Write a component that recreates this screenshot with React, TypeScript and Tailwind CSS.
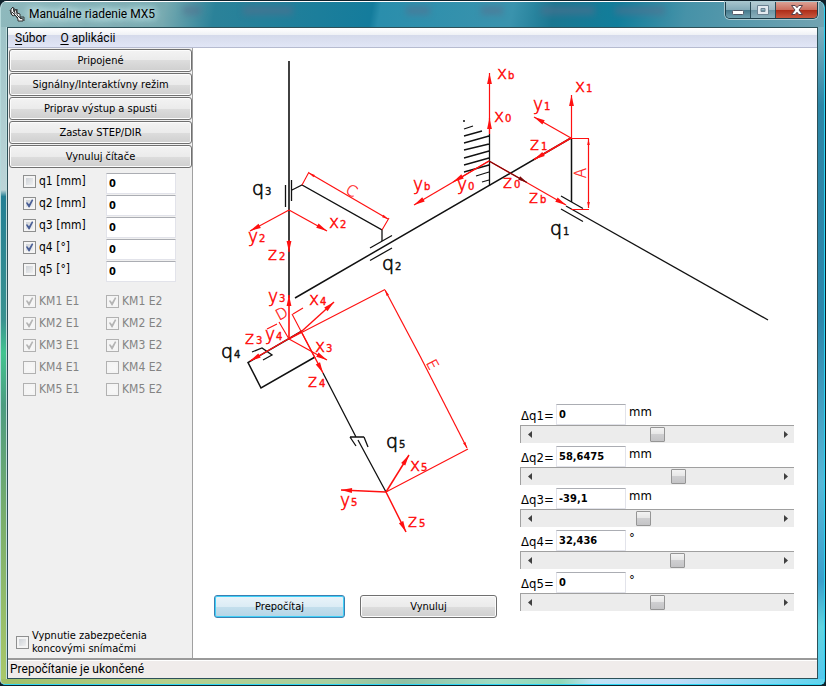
import { useState } from 'react'

const RED = '#ff1010'
const INK = '#111111'

const axes = [
  { name: 'q1', unit: '[mm]', on: false },
  { name: 'q2', unit: '[mm]', on: true },
  { name: 'q3', unit: '[mm]', on: true },
  { name: 'q4', unit: '[°]', on: true },
  { name: 'q5', unit: '[°]', on: false },
]

const deltas = [
  { name: 'q1', value: '0', unit: 'mm', range: 315 },
  { name: 'q2', value: '58,6475', unit: 'mm', range: 315 },
  { name: 'q3', value: '-39,1', unit: 'mm', range: 315 },
  { name: 'q4', value: '32,436', unit: '°', range: 180 },
  { name: 'q5', value: '0', unit: '°', range: 180 },
]

const panelButtons = [
  'Pripojené',
  'Signálny/Interaktívny režim',
  'Priprav výstup a spusti',
  'Zastav STEP/DIR',
  'Vynuluj čítače',
]

type CheckProps = { id: string; checked: boolean; disabled?: boolean }

const Check = ({ id, checked, disabled = false }: CheckProps) => {
  return (
    <span className="grid h-[13px] w-[13px] shrink-0">
      <input
        id={id}
        type="checkbox"
        defaultChecked={checked}
        disabled={disabled}
        className="peer col-start-1 row-start-1 h-[13px] w-[13px] appearance-none border border-[#8e8f8f] bg-linear-to-br from-[#c5cad0] to-[#f8f8f8] shadow-[inset_0_0_0_2px_#f4f4f4] disabled:border-[#b1b1b1] disabled:from-[#f4f4f4] disabled:to-[#f8f8f8]"
      />
      <svg
        viewBox="0 0 13 13"
        className="pointer-events-none invisible col-start-1 row-start-1 h-[13px] w-[13px] text-[#4a5f97] peer-checked:visible peer-disabled:text-[#b4b4b4]"
      >
        <path d="M3 6l1-1 2 2.300 3-5 1.300.7L6.500 10.500H5.700z" fill="currentColor" />
      </svg>
    </span>
  )
}

const valueBox =
  "h-[21px] w-[70px] border border-[#e2e3ea] border-t-[#abadb3] bg-white px-[2px] font-['DejaVu_Sans_Condensed','DejaVu_Sans',sans-serif] text-[11px] font-bold text-black outline-none"

const greyButton =
  'h-[23px] rounded-[3px] border border-[#707070] bg-[linear-gradient(#f3f3f3,#ebebeb_50%,#dddddd_50%,#cfcfcf)] pt-[2px] text-[11px] text-black shadow-[inset_0_0_0_1px_#fcfcfc]'

type ArrowProps = { from: [number, number]; to: [number, number]; color?: string; size?: number; width?: number }

const Arrow = ({ from, to, color = RED, size = 11, width = 1.2 }: ArrowProps) => {
  const angle = (Math.atan2(to[1] - from[1], to[0] - from[0]) * 180) / Math.PI
  const half = size * 0.22
  return (
    <g>
      <line x1={from[0]} y1={from[1]} x2={to[0]} y2={to[1]} stroke={color} strokeWidth={width} />
      <polygon
        points={`0,0 ${-size},${-half} ${-size},${half}`}
        transform={`translate(${to[0]} ${to[1]}) rotate(${angle})`}
        fill={color}
      />
    </g>
  )
}

const jointLabels: [string, string, number, number][] = [
  ['q', '3', 252, 195],
  ['q', '1', 550, 235],
  ['q', '2', 382, 270],
  ['q', '4', 221, 358],
  ['q', '5', 386, 448],
]

const axisLabels: [string, string, number, number][] = [
  ['x', 'b', 497, 79],
  ['x', '0', 494, 122],
  ['x', '1', 575, 92],
  ['y', '1', 533, 110],
  ['z', '1', 530, 150],
  ['z', '0', 503, 188],
  ['z', 'b', 529, 203],
  ['y', 'b', 413, 190],
  ['y', '0', 457, 190],
  ['y', '2', 248, 242],
  ['x', '2', 329, 228],
  ['z', '2', 268, 260],
  ['y', '3', 268, 302],
  ['x', '4', 309, 305],
  ['z', '3', 245, 344],
  ['y', '4', 265, 340],
  ['x', '3', 315, 352],
  ['z', '4', 308, 387],
  ['x', '5', 410, 471],
  ['y', '5', 340, 506],
  ['z', '5', 408, 527],
]

const Kinematics = () => {
  return (
    <svg
      viewBox="193 48 624 609"
      role="img"
      aria-label="MX5"
      className="col-start-1 row-start-1 w-full max-w-[624px] font-['DejaVu_Sans',sans-serif]"
    >
      <g fill="none" stroke={INK} strokeWidth="1.3">
        <path d="M289 61V298" strokeWidth="1.600" />
        <path d="M285.500 185v22M291.500 180v21M292 190l10-5 80 45v11" />
        <path d="M370 248l22-12.500M370 260.500l22-12.500" />
        <path d="M295 298L571 138M571.500 138v64" strokeWidth="1.500" />
        <path d="M489.500 134v52M463 121h2M464 129l9-3M464 136l18-5M464 143l25-7M464 150l25-6M464 158l25-7M464 165l25-7M464 172l25-7M476 176l13-4M482 182l7-2" />
        <path d="M561 196l22 12.500M561 209l22 12.500" />
        <path d="M566 206L768 320" />
        <path d="M302 331L248 362.500 261 388 315 357" strokeWidth="1.500" />
        <path d="M252 352l10-4 10 7-9 5" />
        <path d="M323 373l33 64M350 437h14M350 437l6 9M364 437l4 10M358 440l28 52" />
      </g>

      <g fill="none" stroke={RED} strokeWidth="1.1">
        <path d="M302 185l7-13M382 230l7-12" />
        <path d="M571 138.500h18M571 209.500h18" />
        <path d="M289 339L385 289.500 M386 492L468 449" />
        <path d="M267 329l10-5M279 322l10 17M293 314l10-6M292 314l23 44" />
      </g>

      <Arrow from={[289, 210]} to={[250, 231]} />
      <Arrow from={[289, 210]} to={[327, 231]} />
      <Arrow from={[289, 240]} to={[289, 252]} />
      <Arrow from={[345, 194]} to={[309, 173]} size={6} />
      <Arrow from={[345, 194]} to={[388, 219]} size={6} />

      <Arrow from={[489.500, 134]} to={[489.500, 73]} />
      <Arrow from={[489.500, 134]} to={[489.500, 118]} />
      <Arrow from={[489, 161]} to={[453, 182]} />
      <Arrow from={[489, 161]} to={[414, 205]} />
      <Arrow from={[489, 161]} to={[566, 205]} />
      <Arrow from={[489, 161]} to={[527, 182.500]} color="#7c0a0a" size={9} />

      <Arrow from={[571.500, 138]} to={[571.500, 95]} />
      <Arrow from={[571, 138]} to={[534, 117]} />
      <Arrow from={[571, 138]} to={[534, 159.500]} width={1.6} />
      <Arrow from={[588.500, 170]} to={[588.500, 139]} size={6} />
      <Arrow from={[588.500, 170]} to={[588.500, 208]} size={6} />

      <Arrow from={[289, 339]} to={[289, 295]} width={1.6} />
      <Arrow from={[289, 339]} to={[327, 360]} />
      <Arrow from={[302, 331]} to={[250, 361]} width={1.4} />
      <Arrow from={[302, 331]} to={[334, 302]} width={1.4} />
      <Arrow from={[302, 333]} to={[323, 373]} width={1.4} />
      <Arrow from={[420, 356]} to={[385, 290]} size={6} />
      <Arrow from={[420, 356]} to={[467, 448]} size={6} />

      <Arrow from={[386, 492]} to={[409, 455]} width={1.5} />
      <Arrow from={[386, 492]} to={[341, 490]} width={1.5} />
      <Arrow from={[386, 492]} to={[406, 532]} width={1.5} />

      {jointLabels.map(([letter, index, x, y]) => (
        <g key={letter + index} fill={INK} stroke={INK}>
          <text x={x} y={y} fontSize="19" fontWeight="200" strokeWidth="0.700">{letter}</text>
          <text x={x + 13} y={y} fontSize="10" strokeWidth="0.400">{index}</text>
        </g>
      ))}
      {axisLabels.map(([letter, index, x, y]) => (
        <g key={letter + index} fill={RED} stroke={RED}>
          <text x={x} y={y} fontSize="17" fontWeight="200" strokeWidth="0.600">{letter}</text>
          <text x={x + 11} y={y} fontSize="10" strokeWidth="0.400">{index}</text>
        </g>
      ))}
      <g fill={RED} stroke={RED} strokeWidth="0.300" fontSize="15" fontWeight="200" textAnchor="middle">
        <text transform="translate(349 195) rotate(30)">C</text>
        <text transform="translate(284 318) rotate(-28)">D</text>
        <text transform="translate(586 173) rotate(-90)">A</text>
        <text transform="translate(428 367) rotate(62)">E</text>
      </g>
    </svg>
  )
}

type DeltaProps = { name: string; value: string; unit: string; range: number }

const DeltaRow = ({ name, value, unit, range }: DeltaProps) => {
  const [pos, setPos] = useState(parseFloat(value.replace(',', '.')))
  const arrow = 'flex w-[17px] items-center justify-center text-[#404040]'
  return (
    <div className="flex flex-col">
      <div className="flex items-start">
        <label htmlFor={`delta-${name}`} className="w-9 pt-1 pl-px text-[13px] leading-4 whitespace-nowrap">
          Δ{name}=
        </label>
        <input id={`delta-${name}`} type="text" defaultValue={value} className={valueBox} />
        <span className="pl-[3px] text-[13px] leading-4">{unit}</span>
      </div>
      <div className="flex h-[18px] border-t border-l border-[#a0a0a0] bg-[#ececec]">
        <button type="button" aria-label={`${name} -`} onClick={() => setPos(pos - 1)} className={arrow}>
          <svg viewBox="0 0 4 7" className="h-[7px] w-1"><path d="M4 0v7L0 3.500z" fill="currentColor" /></svg>
        </button>
        <input
          type="range"
          aria-label={`Δ${name}`}
          min={-range}
          max={range}
          step="any"
          value={pos}
          onChange={(e) => setPos(Number(e.target.value))}
          className="h-[17px] min-w-0 flex-1 appearance-none bg-transparent [&::-webkit-slider-thumb]:h-[15px] [&::-webkit-slider-thumb]:w-[15px] [&::-webkit-slider-thumb]:appearance-none [&::-webkit-slider-thumb]:rounded-[1px] [&::-webkit-slider-thumb]:border [&::-webkit-slider-thumb]:border-[#959595] [&::-webkit-slider-thumb]:bg-[linear-gradient(#f3f3f3,#e6e6e6_50%,#cfcfd1_50%,#c4c4c6)]"
        />
        <button type="button" aria-label={`${name} +`} onClick={() => setPos(pos + 1)} className={arrow}>
          <svg viewBox="0 0 4 7" className="h-[7px] w-1"><path d="M0 0v7L4 3.500z" fill="currentColor" /></svg>
        </button>
      </div>
    </div>
  )
}

const TitleBar = () => {
  return (
    <header className="relative flex h-[26px] items-start justify-between border-t border-white bg-[linear-gradient(100deg,#8fb9bd,#75a9b0_20%,#2b8299_26%,#147c9c_45%,#2a8eac_46%,#3a93ad_62%,#1a7791_67%,#117e9b_75%,#4692a8_83%,#72a3b1)] pr-[6px] pl-2">
      {/* taskbar icons glowing through the glass */}
      <svg className="absolute inset-0 h-full w-full" aria-hidden="true">
        <g fill="#5a6d8c" opacity="0.5" className="blur-[3px]">
          <rect x="182" y="4" width="18" height="9" />
          <rect x="242" y="4" width="50" height="9" />
          <rect x="405" y="4" width="24" height="9" />
          <rect x="480" y="4" width="22" height="9" />
          <rect x="540" y="4" width="54" height="9" />
          <rect x="614" y="4" width="50" height="9" />
        </g>
      </svg>
      <div className="relative flex items-center gap-1 pt-1">
        <svg viewBox="0 0 16 16" className="h-4 w-4" aria-hidden="true">
          <path d="M2 3l2-2 1 5 2-3 1 4 3 1v4l3 1v2H9v-2L6 9 4 10 2 8z" fill="#f4f4f4" stroke="#222" strokeWidth="0.900" />
          <path d="M1 4l2 5M5 2l1 6M8 3v6l4 4M3 6l6 6M11 11h4v4" stroke="#333" fill="none" />
        </svg>
        <h1 className="text-[12px] leading-4 whitespace-nowrap text-black [text-shadow:0_0_6px_#d5f0f2,0_0_10px_#d5f0f2,0_0_12px_#d5f0f2]">
          Manuálne riadenie MX5
        </h1>
      </div>
      <div className="relative flex h-[17px] overflow-hidden rounded-b-[5px] border border-t-0 border-[#1d3d49] shadow-[0_0_0_1px_#a9c8d0]">
        <button type="button" aria-label="Minimalizovať" className="flex w-[25px] items-center justify-center border-r border-[#2b4b57] bg-[linear-gradient(#a4c3cc,#84abb8_48%,#44778a_50%,#6fa0b0)] pt-[4px]">
          <svg viewBox="0 0 12 5" className="h-[5px] w-3"><rect x="0.500" y="0.500" width="11" height="4" rx="1" fill="#fff" stroke="#535666" /></svg>
        </button>
        <button type="button" aria-label="Maximalizovať" className="flex w-[25px] items-center justify-center border-r border-[#2b4b57] bg-[linear-gradient(#b4cbd2,#9cb9c3_48%,#6c95a4_50%,#8ab0bc)]">
          <svg viewBox="0 0 12 10" className="h-[10px] w-3"><path fillRule="evenodd" d="M.5.500h11v9H.5zM4 3.500h4v3H4z" fill="#e3eaf0" stroke="#6b8292" /></svg>
        </button>
        <button type="button" aria-label="Zavrieť" className="flex w-[41px] items-center justify-center bg-[linear-gradient(#dba194,#cc6f5e_48%,#ad2b16_50%,#c9583f)]">
          <svg viewBox="0 0 12 10" className="h-[10px] w-3"><path d="M.5.500h3.700L6 2.700 7.800.500h3.700L8 5l3.500 4.500H7.800L6 7.300 4.200 9.500H.5L4 5z" fill="#fff" stroke="#56404a" /></svg>
        </button>
      </div>
    </header>
  )
}

const Sidebar = () => {
  return (
    <aside className="flex w-[185px] shrink-0 flex-col border-r border-[#a0a0a0] bg-[#f0f0f0]">
      <div className="flex flex-col gap-px p-px pr-0">
        {panelButtons.map((text) => (
          <button key={text} type="button" className={greyButton}>{text}</button>
        ))}
      </div>

      <div className="flex flex-col pt-1 text-[12px]">
        {axes.map(({ name, unit, on }) => (
          <div key={name} className="flex h-[22px] items-start pl-[15px]">
            <div className="flex w-[83px] items-center gap-[3px]">
              <Check id={`axis-${name}`} checked={on} />
              <label htmlFor={`axis-${name}`} className="leading-[17px]">{name} {unit}</label>
            </div>
            <input type="text" aria-label={`${name} ${unit}`} defaultValue="0" className={valueBox} />
          </div>
        ))}
      </div>

      <div className="grid grid-cols-[83px_auto] pt-[7px] pl-[15px] text-[12px] text-[#838383]">
        {[1, 2, 3, 4, 5].map((n) =>
          ['E1', 'E2'].map((end) => (
            <div key={end + n} className="flex h-[22px] items-center gap-[3px]">
              <Check id={`km${n}-${end}`} checked={n < 4} disabled />
              <label htmlFor={`km${n}-${end}`}>KM{n} {end}</label>
            </div>
          ))
        )}
      </div>

      <div className="mt-auto flex items-center gap-[3px] pb-[3px] pl-2">
        <Check id="limits-off" checked={false} />
        <label htmlFor="limits-off" className="text-[11px] leading-[13px]">
          Vypnutie zabezpečenia<br />koncovými snímačmi
        </label>
      </div>
    </aside>
  )
}

const App = () => {
  return (
    <div className="flex min-h-screen bg-[#10222c] font-[Roboto,'Noto_Sans',sans-serif] text-black">
      <div className="my-px mr-px flex flex-1 flex-col overflow-hidden rounded-t-[7px] rounded-b-[5px] border-r border-b border-l border-[#2cd5f5] border-l-[#b5d9db] bg-white">
        <TitleBar />
        <div className="flex flex-1">
          <div className="w-[6px] shrink-0 bg-[linear-gradient(#9dc3c7,#bcd5d8_25%,#237f94_26%,#3a9290_45%,#42c490_50%,#4c9c80_58%,#78ae6c_75%,#a9c86a)]" />
          <div className="flex min-w-0 flex-1 flex-col border border-[#2d5058] shadow-[0_0_0_1px_#bfdcdc]">
            <nav className="flex h-[20px] items-center gap-[14px] border-b border-[#b6bbd0] bg-[linear-gradient(#ffffff,#eef0f5_38%,#d5daeb_39%,#e1e6f6)] pl-[7px] text-[12px]">
              <a href="#subor"><span className="underline underline-offset-2">S</span>úbor</a>
              <a href="#aplikacia"><span className="underline underline-offset-2">O</span> aplikácii</a>
            </nav>
            <div className="flex flex-1 bg-white font-['DejaVu_Sans_Condensed','DejaVu_Sans',sans-serif]">
              <Sidebar />
              <main className="grid min-w-0 flex-1">
                <Kinematics />
                <div className="z-10 col-start-1 row-start-1 flex items-end justify-between self-end pr-[23px] pl-[21px]">
                  <div className="flex gap-[15px] pb-10">
                    <button
                      type="button"
                      className="h-[23px] w-[131px] rounded-[3px] border border-[#3c7fb1] bg-[linear-gradient(#eaf4fa,#dcecf5_50%,#c4dfed_50%,#b5d5e6)] pt-[2px] text-[11px] shadow-[inset_0_0_0_1px_#3fd0f8]"
                    >
                      Prepočítaj
                    </button>
                    <button type="button" className={`${greyButton} w-[137px]`}>Vynuluj</button>
                  </div>
                  <div className="flex w-[274px] flex-col gap-[3px] pb-[47px]">
                    {deltas.map((d) => (
                      <DeltaRow key={d.name} {...d} />
                    ))}
                  </div>
                </div>
              </main>
            </div>
            <footer className="border-t-2 border-[#9a9a9a] bg-[#f0eceb]">
              <p className="border-t border-white pl-[2px] text-[12px] leading-[17px]">Prepočítanie je ukončené</p>
            </footer>
          </div>
          <div className="w-[6px] shrink-0 bg-[linear-gradient(#7fb0bf,#2c86a6_12%,#2d87ab_45%,#57b8d8_70%,#3aa0cc_85%,#62d4e0_92%,#56c8ee)]" />
        </div>
        <div className="h-[5px] shrink-0 bg-[linear-gradient(90deg,#9fbf68,#b5cf8c_20%,#a9cfa0_40%,#90c0a4_49%,#a0dcc4_60%,#8fd8b8_68%,#bfe2f6_72%,#c0dcf8_82%,#5fd4ee)]" />
      </div>
    </div>
  )
}

export default App
